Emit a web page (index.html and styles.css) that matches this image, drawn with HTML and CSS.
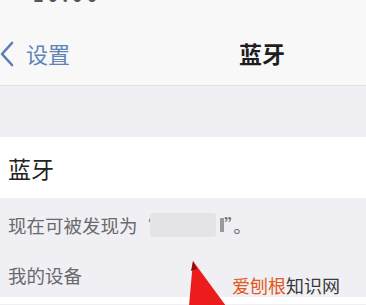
FILE: index.html
```html
<!DOCTYPE html>
<html lang="zh-CN">
<head>
    <meta charset="UTF-8">
    <meta name="viewport" content="width=device-width, initial-scale=1.0">
    <title>蓝牙</title>
    <link rel="stylesheet" href="styles.css">
</head>
<body>
    <!-- Верхняя панель -->
    <div class="navbar">
        <div class="status"><span class="time">10:00</span></div>
        <div class="nav-row">
            <svg class="back-icon" width="14" height="26" viewBox="0 0 14 26">
                <polyline points="12,2 2,13 12,24" fill="none" stroke="#5a7db4" stroke-width="2.6" stroke-linecap="round" stroke-linejoin="round"/>
            </svg>
            <span class="back-text">设置</span>
            <span class="nav-title">蓝牙</span>
        </div>
    </div>

    <div class="group-gap"></div>

    <div class="cell">
        <div class="cell-title">蓝牙</div>
    </div>

    <div class="footer-text">现在可被发现为“<span class="blur-name"></span><span class="blur-mark"></span>”。</div>

    <div class="section-header">我的设备</div>

    <div class="bottom-cell"></div>

    <!-- Стрелка и водяной знак -->
    <svg class="arrow" width="40" height="45" viewBox="0 0 40 45">
        <polygon points="5,0 1,45 38,45" fill="#ec1c1c"/>
        <polygon points="5,0 3,10 9,8" fill="#8a1010"/>
    </svg>
    <div class="watermark"><span class="wm-accent">爱刨根</span>知识网</div>
</body>
</html>
```

FILE: styles.css
```css
body {
    margin: 0;
    padding: 0;
    width: 366px;
    height: 305px;
    overflow: hidden;
    position: relative;
    background-color: #efeff4;
    font-family: "Noto Sans CJK SC", "Noto Sans", sans-serif;
    color: #222;
}
.navbar {
    height: 85px;
    background-color: #f8f8f8;
    border-bottom: 1px solid #e2e2e4;
}
.status {
    height: 26px;
    overflow: hidden;
    padding-left: 33px;
}
.time {
    display: block;
    margin-top: -15px;
    font-size: 18px;
    line-height: 18px;
    font-weight: bold;
    color: #555;
    letter-spacing: 4px;
}
.nav-row {
    height: 59px;
    display: flex;
    align-items: center;
    padding-bottom: 6px;
    box-sizing: border-box;
}
.back-icon {
    margin-left: 0;
    margin-top: 2px;
}
.back-text {
    margin-left: 12px;
    font-size: 22px;
    color: #5f84b8;
}
.nav-title {
    margin-left: auto;
    margin-right: 81px;
    font-size: 23px;
    font-weight: bold;
    color: #1e1e1e;
}
.group-gap {
    height: 51px;
}
.cell {
    height: 61px;
    background-color: #fff;
    display: flex;
    align-items: center;
    padding-left: 8px;
}
.cell-title {
    font-size: 23px;
    color: #222;
    margin-top: 1px;
}
.footer-text {
    padding: 10px 0 0 8px;
    height: 33px;
    font-size: 18.5px;
    line-height: 24px;
    color: #6a6a6e;
    display: flex;
    align-items: center;
}
.blur-name {
    display: inline-block;
    width: 66px;
    height: 24px;
    margin-left: -6px;
    background-color: #e4e4e8;
    border-radius: 3px;
}
.blur-mark {
    display: inline-block;
    width: 4px;
    height: 14px;
    margin-left: 4px;
    background-color: #9a9a9e;
}
.section-header {
    padding: 21px 0 0 8px;
    height: 35px;
    font-size: 18.5px;
    color: #6a6a6e;
}
.bottom-cell {
    height: 7px;
    background-color: #fff;
}
.arrow {
    position: absolute;
    left: 188px;
    top: 261px;
}
.watermark {
    position: absolute;
    left: 232px;
    top: 273px;
    font-size: 18px;
    line-height: 24px;
    color: #3a3a3a;
}
.wm-accent {
    color: #e2591f;
}
```
